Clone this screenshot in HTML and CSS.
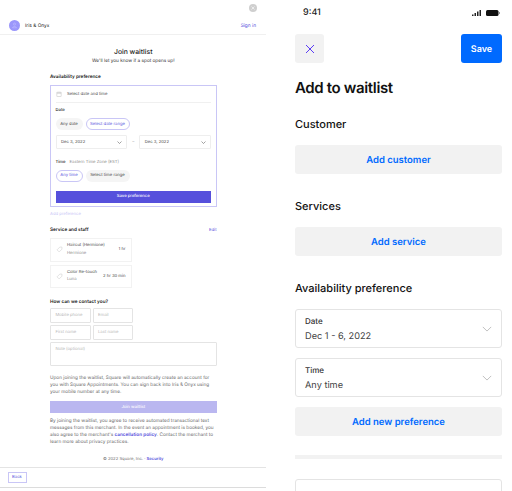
FILE: index.html
```html
<!DOCTYPE html>
<html lang="en">
<head>
    <meta charset="UTF-8">
    <meta name="viewport" content="width=device-width, initial-scale=1.0">
    <title>Join waitlist</title>
    <link rel="stylesheet" href="styles.css">
</head>
<body>
    <div class="screens">
        <!-- web flow -->
        <section class="web">
            <div class="close-row">
                <span class="close-dot">
                    <svg viewBox="0 0 8 8" width="4" height="4"><path d="M1 1l6 6M7 1L1 7" stroke="#fff" stroke-width="1.2"/></svg>
                </span>
            </div>
            <header class="merchant">
                <div class="merchant-name">
                    <span class="avatar">
                        <svg viewBox="0 0 12 12" width="7" height="7"><circle cx="6" cy="3.6" r="1.8" fill="none" stroke="#c9c6ff" stroke-width=".8"/><path d="M2.5 10c.5-3 6.5-3 7 0z" fill="none" stroke="#c9c6ff" stroke-width=".8"/></svg>
                    </span>
                    Iris &amp; Onyx
                </div>
                <a class="link">Sign in</a>
            </header>

            <div class="web-body">
                <h1 class="web-title">Join waitlist</h1>
                <p class="web-sub">We'll let you know if a spot opens up!</p>

                <h2 class="web-head web-head-first">Availability preference</h2>
                <div class="pref-box">
                    <div class="pref-top">
                        <svg viewBox="0 0 10 10" width="6" height="6"><rect x="1.5" y="2" width="7" height="7" fill="none" stroke="#c4c4c4" stroke-width=".9"/><path d="M1.5 4h7M3.5 1v2M6.5 1v2" stroke="#c4c4c4" stroke-width=".9"/></svg>
                        Select date and time
                    </div>
                    <div class="pref-label pref-label-date">Date</div>
                    <div class="pills">
                        <span class="pill pill-any">Any date</span>
                        <span class="pill pill-range pill-on">Select date range</span>
                    </div>
                    <div class="date-row">
                        <div class="date-select">Dec 3, 2022
                            <svg viewBox="0 0 10 6" width="5" height="3"><path d="M1 1l4 4 4-4" fill="none" stroke="#555" stroke-width="1.1"/></svg>
                        </div>
                        <span class="date-dash">–</span>
                        <div class="date-select">Dec 3, 2022
                            <svg viewBox="0 0 10 6" width="5" height="3"><path d="M1 1l4 4 4-4" fill="none" stroke="#555" stroke-width="1.1"/></svg>
                        </div>
                    </div>
                    <div class="pref-label pref-label-time">Time <span class="zone">Eastern Time Zone (EST)</span></div>
                    <div class="pills">
                        <span class="pill pill-any pill-on">Any time</span>
                        <span class="pill pill-range">Select time range</span>
                    </div>
                    <div class="save-pref">Save preference</div>
                </div>
                <div class="add-pref">Add preference</div>

                <div class="service-head">
                    <h2 class="web-head">Service and staff</h2>
                    <a class="link">Edit</a>
                </div>
                <div class="service-card">
                    <svg viewBox="0 0 10 10" width="7" height="7"><path d="M1.5 5.5L5.5 1.5H8.5V4.5L4.5 8.5z" fill="none" stroke="#d4d4d4" stroke-width=".9"/></svg>
                    <div class="service-info">
                        <div>Haircut (Hermione)</div>
                        <div class="service-staff">Hermione</div>
                    </div>
                    <span class="service-time">1 hr</span>
                </div>
                <div class="service-card service-card-second">
                    <svg viewBox="0 0 10 10" width="7" height="7"><path d="M1.5 5.5L5.5 1.5H8.5V4.5L4.5 8.5z" fill="none" stroke="#d4d4d4" stroke-width=".9"/></svg>
                    <div class="service-info">
                        <div>Color Re-touch</div>
                        <div class="service-staff">Luna</div>
                    </div>
                    <span class="service-time">2 hr 30 min</span>
                </div>

                <h2 class="web-head contact-head">How can we contact you?</h2>
                <div class="contact-grid">
                    <div class="field">Mobile phone</div>
                    <div class="field">Email</div>
                    <div class="field">First name</div>
                    <div class="field">Last name</div>
                </div>
                <div class="field note">Note (optional)</div>

                <p class="fine fine-first">Upon joining the waitlist, Square will automatically create an account for you with Square Appointments. You can sign back into Iris &amp; Onyx using your mobile number at any time.</p>
                <div class="join-btn">Join waitlist</div>
                <p class="fine fine-second">By joining the waitlist, you agree to receive automated transactional text messages from this merchant. In the event an appointment is booked, you also agree to the merchant's <a class="link-strong">cancellation policy</a>. Contact the merchant to learn more about privacy practices.</p>
                <p class="copyright">© 2022 Square, Inc. · <a class="link-strong">Security</a></p>
            </div>

            <footer class="web-foot">
                <span class="back-btn">Back</span>
            </footer>
        </section>

        <!-- mobile flow -->
        <section class="phone">
            <div class="status">
                <span>9:41</span>
                <svg class="status-icons" viewBox="0 0 30 7" width="30" height="7">
                    <path d="M1 4.5h1.5V6H1zM3.5 3H5v3H3.5zM6 1.5h1.5V6H6zM8.5 0H10v6H8.5z" fill="#222"/>
                    <rect x="15" y="0" width="12.5" height="6" rx="1.5" fill="#111"/>
                    <rect x="28" y="2" width="1" height="2" fill="#999"/>
                </svg>
            </div>
            <div class="actions">
                <span class="icon-btn">
                    <svg viewBox="0 0 10 10" width="10" height="10"><path d="M1 1l8 8M9 1L1 9" stroke="#5b3df5" stroke-width="1"/></svg>
                </span>
                <span class="save-btn">Save</span>
            </div>
            <h1 class="phone-title">Add to waitlist</h1>

            <h2 class="phone-head phone-head-customer">Customer</h2>
            <div class="grey-btn">Add customer</div>

            <h2 class="phone-head">Services</h2>
            <div class="grey-btn">Add service</div>

            <h2 class="phone-head">Availability preference</h2>
            <div class="select-box">
                <div>
                    <div class="select-label">Date</div>
                    <div class="select-value">Dec 1 - 6, 2022</div>
                </div>
                <svg viewBox="0 0 12 7" width="10" height="6"><path d="M1 1l5 5 5-5" fill="none" stroke="#b4b4b4" stroke-width="1"/></svg>
            </div>
            <div class="select-box select-box-next">
                <div>
                    <div class="select-label">Time</div>
                    <div class="select-value">Any time</div>
                </div>
                <svg viewBox="0 0 12 7" width="10" height="6"><path d="M1 1l5 5 5-5" fill="none" stroke="#b4b4b4" stroke-width="1"/></svg>
            </div>
            <div class="grey-btn add-new">Add new preference</div>
            <div class="section-rule"></div>
            <div class="select-box cut-box"></div>
        </section>
    </div>
</body>
</html>
```

FILE: styles.css
```css
:root {
    --purple: #5650dc;
    --purple-soft: #c9c6f6;
    --blue: #006aff;
    --grey-btn: #f2f2f2;
    --text: #1a1a1a;
    --text-gray: #6a6a6a;
}

* {
    margin: 0;
    padding: 0;
    box-sizing: border-box;
}

html, body {
    height: 100%;
    overflow: hidden;
}

body {
    background-color: #fff;
    color: var(--text);
    font-family: 'Inter', 'Liberation Sans', sans-serif;
    text-rendering: geometricPrecision;
}

.screens {
    display: flex;
    height: 491px;
    overflow: hidden;
}

/* left side */

.web {
    width: 266px;
    flex: none;
    font-size: 4.2px;
    white-space: nowrap;
}

.close-row {
    height: 17px;
    padding: 4px 9px 0 0;
    display: flex;
    justify-content: flex-end;
}

.close-dot {
    width: 8px;
    height: 8px;
    border-radius: 50%;
    background-color: #cfcfcf;
    display: flex;
    align-items: center;
    justify-content: center;
}

.merchant {
    height: 18px;
    padding: 0 10px 0 9px;
    display: flex;
    justify-content: space-between;
    align-items: center;
    border-bottom: 1px solid #f0f0f0;
    font-size: 4.8px;
}

.merchant-name {
    display: flex;
    align-items: center;
    gap: 5px;
}

.avatar {
    width: 11px;
    height: 11px;
    border-radius: 50%;
    background-color: #9b97fb;
    display: flex;
    align-items: center;
    justify-content: center;
}

.link {
    color: var(--purple);
}

.link-strong {
    color: var(--purple);
    font-weight: 600;
}

.web-body {
    padding: 12px 49.5px 0 50px;
    height: 431.5px;
}

.web-title {
    font-size: 6.8px;
    line-height: 10px;
    font-weight: 500;
    text-align: center;
}

.web-sub {
    margin-top: 1px;
    font-size: 4.7px;
    line-height: 7px;
    text-align: center;
    color: #333;
}

.web-head {
    font-size: 4.7px;
    line-height: 7px;
    font-weight: 600;
}

.web-head-first {
    margin-top: 9px;
}

.pref-box {
    margin-top: 4px;
    height: 122px;
    padding: 0 4.5px;
    border: 1px solid var(--purple-soft);
}

.pref-top {
    height: 17px;
    display: flex;
    align-items: center;
    gap: 5px;
    padding-left: 0.5px;
    border-bottom: 1px solid #f0f0f0;
    color: #444;
}

.pref-label {
    line-height: 7px;
    font-weight: 500;
}

.pref-label-date {
    margin-top: 4px;
}

.pref-label-time {
    margin-top: 9.5px;
}

.zone {
    margin-left: 3px;
    font-weight: 400;
    color: #8a8a8a;
}

.pills {
    margin-top: 4px;
    display: flex;
    gap: 3px;
}

.pill {
    height: 12px;
    border-radius: 6px;
    background-color: #f5f5f5;
    display: flex;
    align-items: center;
    justify-content: center;
    color: #444;
}

.pill-any {
    width: 27px;
}

.pill-range {
    width: 44px;
}

.pill-on {
    background-color: #fff;
    border: 1px solid var(--purple-soft);
    color: var(--purple);
}

.date-row {
    margin-top: 5px;
    display: flex;
    align-items: center;
}

.date-select {
    flex: 1;
    height: 14px;
    padding: 0 4.5px;
    display: flex;
    justify-content: space-between;
    align-items: center;
    border: 1px solid #eeeeee;
    border-radius: 1px;
    color: #444;
}

.date-dash {
    width: 12px;
    text-align: center;
    color: #999;
}

.save-pref {
    margin-top: 9px;
    height: 12px;
    background-color: var(--purple);
    color: #fff;
    font-weight: 500;
    display: flex;
    align-items: center;
    justify-content: center;
}

.add-pref {
    margin-top: 3.5px;
    line-height: 7px;
    color: var(--purple-soft);
}

.service-head {
    margin-top: 9.5px;
    display: flex;
    justify-content: space-between;
    align-items: center;
}

.service-card {
    margin-top: 4px;
    width: 81.5px;
    height: 23.5px;
    padding: 0 5px;
    display: flex;
    align-items: center;
    gap: 4px;
    border: 1px solid #f2f2f2;
    color: #444;
}

.service-card-second {
    margin-top: 3px;
}

.service-info {
    flex: 1;
    line-height: 7.5px;
}

.service-staff {
    color: #8a8a8a;
}

.contact-head {
    margin-top: 10.5px;
}

.contact-grid {
    margin-top: 2.5px;
    width: 83px;
    display: grid;
    grid-template-columns: 40.5px 40.5px;
    column-gap: 2px;
    row-gap: 2px;
}

.field {
    height: 15px;
    padding: 0 4.5px;
    display: flex;
    align-items: center;
    border: 1px solid #e4e4e4;
    border-radius: 1px;
    color: #b5b5b5;
}

.note {
    margin-top: 1.5px;
    height: 24.5px;
    padding-top: 4px;
    align-items: flex-start;
}

.fine {
    font-size: 4.7px;
    line-height: 7px;
    color: var(--text-gray);
    white-space: normal;
}

.fine-first {
    margin-top: 9px;
}

.join-btn {
    margin-top: 5px;
    height: 12px;
    background-color: #bab7f0;
    color: #fff;
    font-weight: 500;
    display: flex;
    align-items: center;
    justify-content: center;
}

.fine-second {
    margin-top: 5px;
}

.copyright {
    margin-top: 9.5px;
    line-height: 7px;
    text-align: center;
    color: var(--text-gray);
}

.web-foot {
    height: 21.5px;
    padding: 4px 0 0 7.5px;
    border-top: 1px solid #e4e4e4;
    border-bottom: 1px solid #dcdcdc;
}

.back-btn {
    width: 19px;
    height: 11.5px;
    display: flex;
    align-items: center;
    justify-content: center;
    border: 1px solid var(--purple-soft);
    color: var(--purple);
}

/* right side */

.phone {
    flex: 1;
    padding: 0 10px 0 29px;
}

.status {
    height: 34px;
    padding: 7px 1px 0 8px;
    display: flex;
    justify-content: space-between;
    align-items: flex-start;
    font-size: 9px;
    line-height: 12px;
    font-weight: 500;
    color: #222;
}

.status-icons {
    margin-top: 3px;
}

.actions {
    display: flex;
    justify-content: space-between;
}

.icon-btn {
    width: 29px;
    height: 29px;
    border-radius: 3px;
    background-color: var(--grey-btn);
    display: flex;
    align-items: center;
    justify-content: center;
}

.save-btn {
    width: 41px;
    height: 29px;
    padding-top: 1px;
    border-radius: 3px;
    background-color: var(--blue);
    color: #fff;
    font-size: 9px;
    font-weight: 600;
    display: flex;
    align-items: center;
    justify-content: center;
}

.phone-title {
    margin-top: 15px;
    font-size: 15px;
    line-height: 20px;
    font-weight: 600;
    letter-spacing: -0.35px;
    color: #111;
}

.phone-head {
    margin-top: 25px;
    font-size: 11px;
    line-height: 14px;
    font-weight: 500;
    color: #111;
}

.phone-head-customer {
    margin-top: 19px;
}

.grey-btn {
    margin-top: 14px;
    height: 29px;
    padding-top: 1px;
    border-radius: 3px;
    background-color: var(--grey-btn);
    color: var(--blue);
    font-size: 9.5px;
    font-weight: 600;
    display: flex;
    align-items: center;
    justify-content: center;
}

.select-box {
    margin-top: 14px;
    height: 39px;
    padding: 0 9px;
    display: flex;
    justify-content: space-between;
    align-items: center;
    border: 1px solid #e4e4e4;
    border-radius: 3px;
}

.select-box-next {
    margin-top: 10px;
}

.select-label {
    font-size: 8px;
    line-height: 12px;
    font-weight: 500;
    color: #333;
}

.select-value {
    margin-top: 3px;
    font-size: 9.2px;
    line-height: 13px;
    color: #444;
}

.add-new {
    margin-top: 10px;
}

.section-rule {
    margin-top: 19px;
    height: 4px;
    background-color: #f2f2f2;
}

.cut-box {
    margin-top: 20px;
}
```
